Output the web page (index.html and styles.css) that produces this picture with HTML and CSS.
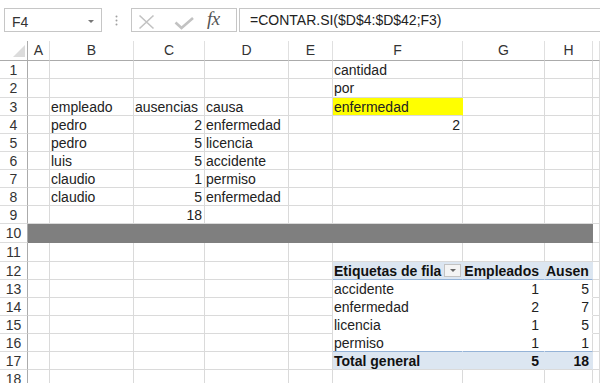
FILE: index.html
```html
<!DOCTYPE html>
<html lang="es">
<head>
<meta charset="utf-8">
<title>Hoja</title>
<link rel="stylesheet" href="styles.css">
</head>
<body>
<div class="toolbar">
  <div class="namebox"><span>F4</span><span class="caret"></span></div>
  <svg class="dots" width="3" height="11" viewBox="0 0 3 11"><circle cx="1.5" cy="1.5" r="1"/><circle cx="1.5" cy="5.5" r="1"/><circle cx="1.5" cy="9.5" r="1"/></svg>
  <div class="fbtns">
    <svg class="xc" width="66" height="22" viewBox="0 0 66 22">
      <path d="M7.5 6.5 L21.5 19.5 M21.5 6.5 L7.5 19.5" stroke="#c2c2c2" stroke-width="1.6" fill="none"/>
      <path d="M43.5 13.5 L49.5 19 L61 9" stroke="#c2c2c2" stroke-width="2.6" fill="none"/>
    </svg>
    <span class="fx">fx</span>
  </div>
  <div class="formula">=CONTAR.SI($D$4:$D$42;F3)</div>
</div>
<div class="sheet">
  <div class="c rh corner"><svg width="27" height="19" viewBox="0 0 27 19"><polygon points="25,4 25,16 13,16" fill="#dcdcdc"/></svg></div>
  <div class="c ch">A</div><div class="c ch">B</div><div class="c ch">C</div><div class="c ch">D</div><div class="c ch">E</div><div class="c ch">F</div><div class="c ch">G</div><div class="c ch">H</div><div class="c ch"></div>

  <div class="c rh">1</div><div class="c"></div><div class="c"></div><div class="c"></div><div class="c"></div><div class="c"></div><div class="c">cantidad</div><div class="c"></div><div class="c"></div><div class="c"></div>
  <div class="c rh">2</div><div class="c"></div><div class="c"></div><div class="c"></div><div class="c"></div><div class="c"></div><div class="c">por</div><div class="c"></div><div class="c"></div><div class="c"></div>
  <div class="c rh">3</div><div class="c"></div><div class="c">empleado</div><div class="c">ausencias</div><div class="c">causa</div><div class="c"></div><div class="c yellow">enfermedad</div><div class="c"></div><div class="c"></div><div class="c"></div>
  <div class="c rh">4</div><div class="c"></div><div class="c">pedro</div><div class="c num">2</div><div class="c">enfermedad</div><div class="c"></div><div class="c num">2</div><div class="c"></div><div class="c"></div><div class="c"></div>
  <div class="c rh">5</div><div class="c"></div><div class="c">pedro</div><div class="c num">5</div><div class="c">licencia</div><div class="c"></div><div class="c"></div><div class="c"></div><div class="c"></div><div class="c"></div>
  <div class="c rh">6</div><div class="c"></div><div class="c">luis</div><div class="c num">5</div><div class="c">accidente</div><div class="c"></div><div class="c"></div><div class="c"></div><div class="c"></div><div class="c"></div>
  <div class="c rh">7</div><div class="c"></div><div class="c">claudio</div><div class="c num">1</div><div class="c">permiso</div><div class="c"></div><div class="c"></div><div class="c"></div><div class="c"></div><div class="c"></div>
  <div class="c rh">8</div><div class="c"></div><div class="c">claudio</div><div class="c num">5</div><div class="c">enfermedad</div><div class="c"></div><div class="c"></div><div class="c"></div><div class="c"></div><div class="c"></div>
  <div class="c rh">9</div><div class="c"></div><div class="c"></div><div class="c num">18</div><div class="c"></div><div class="c"></div><div class="c"></div><div class="c"></div><div class="c"></div><div class="c"></div>
  <div class="c rh">10</div><div class="c gray"></div><div class="c gray"></div><div class="c gray"></div><div class="c gray"></div><div class="c gray"></div><div class="c gray"></div><div class="c gray"></div><div class="c gray"></div><div class="c"></div>
  <div class="c rh">11</div><div class="c"></div><div class="c"></div><div class="c"></div><div class="c"></div><div class="c"></div><div class="c"></div><div class="c"></div><div class="c"></div><div class="c"></div>
  <div class="c rh">12</div><div class="c"></div><div class="c"></div><div class="c"></div><div class="c"></div><div class="c"></div><div class="c ph phf"><span>Etiquetas de fila</span><span class="dd"><span class="caret small"></span></span></div><div class="c ph num g">Empleados</div><div class="c ph h"><span class="clip">Ausencias</span></div><div class="c"></div>
  <div class="c rh">13</div><div class="c"></div><div class="c"></div><div class="c"></div><div class="c"></div><div class="c"></div><div class="c pb">accidente</div><div class="c pb num g">1</div><div class="c pb pbh num hn">5</div><div class="c"></div>
  <div class="c rh">14</div><div class="c"></div><div class="c"></div><div class="c"></div><div class="c"></div><div class="c"></div><div class="c pb">enfermedad</div><div class="c pb num g">2</div><div class="c pb pbh num hn">7</div><div class="c"></div>
  <div class="c rh">15</div><div class="c"></div><div class="c"></div><div class="c"></div><div class="c"></div><div class="c"></div><div class="c pb">licencia</div><div class="c pb num g">1</div><div class="c pb pbh num hn">5</div><div class="c"></div>
  <div class="c rh">16</div><div class="c"></div><div class="c"></div><div class="c"></div><div class="c"></div><div class="c"></div><div class="c pb pl">permiso</div><div class="c pb pl num g">1</div><div class="c pb pbh pl num hn">1</div><div class="c"></div>
  <div class="c rh">17</div><div class="c"></div><div class="c"></div><div class="c"></div><div class="c"></div><div class="c"></div><div class="c pt">Total general</div><div class="c pt num g">5</div><div class="c pt num hn">18</div><div class="c"></div>
  <div class="c rh">18</div><div class="c"></div><div class="c"></div><div class="c"></div><div class="c"></div><div class="c"></div><div class="c"></div><div class="c"></div><div class="c"></div><div class="c"></div>
</div>
</body>
</html>
```

FILE: styles.css
```css
* { box-sizing: border-box; }
html, body { margin: 0; padding: 0; background: #fff; }
body {
  width: 600px;
  height: 383px;
  overflow: hidden;
  font-family: "Liberation Sans", Arial, sans-serif;
  font-size: 14px;
  color: #222;
}

/* ---------- formula bar ---------- */
.toolbar {
  height: 41px;
  display: flex;
  align-items: flex-start;
  padding-top: 8px;
}
.namebox {
  margin-left: 4px;
  width: 98px;
  height: 24px;
  border: 1px solid #c6c6c6;
  display: flex;
  align-items: center;
  justify-content: space-between;
  padding: 3px 7px 0 7px;
  color: #333;
  line-height: 16px;
}
.caret {
  width: 0;
  height: 0;
  border-left: 3px solid transparent;
  border-right: 3px solid transparent;
  border-top: 3px solid #777;
}
.dots {
  margin-left: 13px;
  margin-top: 7px;
  fill: #a0a0a0;
}
.fbtns {
  margin-left: 13px;
  width: 106px;
  height: 24px;
  border: 1px solid #c6c6c6;
  display: flex;
  align-items: flex-start;
}
.xc { display: block; }
.fx {
  margin-left: 9px;
  font-family: "Liberation Serif", "Times New Roman", serif;
  font-style: italic;
  font-size: 19px;
  line-height: 20px;
  color: #555;
  letter-spacing: -0.5px;
}
.formula {
  margin-left: 2px;
  flex: 1;
  height: 24px;
  border: 1px solid #c6c6c6;
  border-right: none;
  padding: 3px 0 0 10px;
  line-height: 16px;
  color: #222;
  white-space: nowrap;
}

/* ---------- sheet grid ---------- */
.sheet {
  display: grid;
  grid-template-columns: 28px 22px 84px 71px 84px 44px 130px 82px 48px 1fr;
  grid-template-rows: 20px 18px 19px 18px 18px 18px 18px 18px 18px 18px 19px 19px 18px 18px 18px 18px 18px 18px 18px;
  line-height: 18px;
}
.c {
  border-right: 1px solid #dadada;
  border-bottom: 1px solid #dadada;
  padding: 0 1px;
  white-space: nowrap;
  overflow: hidden;
}
.ch {
  text-align: center;
  color: #333;
  line-height: 19px;
  border-right-color: #e0e0e0;
  border-bottom-color: #ababab;
}
.rh {
  text-align: center;
  color: #333;
  border-right-color: #ababab;
  border-bottom-color: #dcdcdc;
}
.corner { padding: 0; border-bottom-color: #ababab; }
.corner svg { display: block; }
.num { text-align: right; padding-right: 2px; }
.yellow { background: #ffff00; border-right-color: #ffff00; }
.gray { background: #7f7f7f; border-right-color: #7f7f7f; border-bottom-color: #7f7f7f; }

/* ---------- pivot table ---------- */
.ph {
  background: #dce6f1;
  border-right-color: #dce6f1;
  border-bottom-color: #95b3d7;
  font-weight: bold;
  color: #111;
}
.phf {
  display: flex;
  justify-content: space-between;
  align-items: flex-start;
  padding-right: 1px;
}
.dd {
  margin-top: 2px;
  width: 17px;
  height: 13px;
  border: 1px solid #c3c3c3;
  background: #f4f4f4;
  display: flex;
  align-items: center;
  justify-content: center;
}
.caret.small { border-top-color: #666; }
.g { padding-right: 5px; }
.h { padding-left: 1px; }
.clip { display: block; width: 43px; overflow: hidden; }
.hn { padding-right: 3px; }
.pb { border-right-color: #fff; border-bottom-color: #fff; }
.pbh { border-right-color: #dadada; }
.pl { border-bottom-color: #95b3d7; }
.pt {
  background: #dce6f1;
  border-right-color: #dce6f1;
  font-weight: bold;
  color: #111;
}
```
